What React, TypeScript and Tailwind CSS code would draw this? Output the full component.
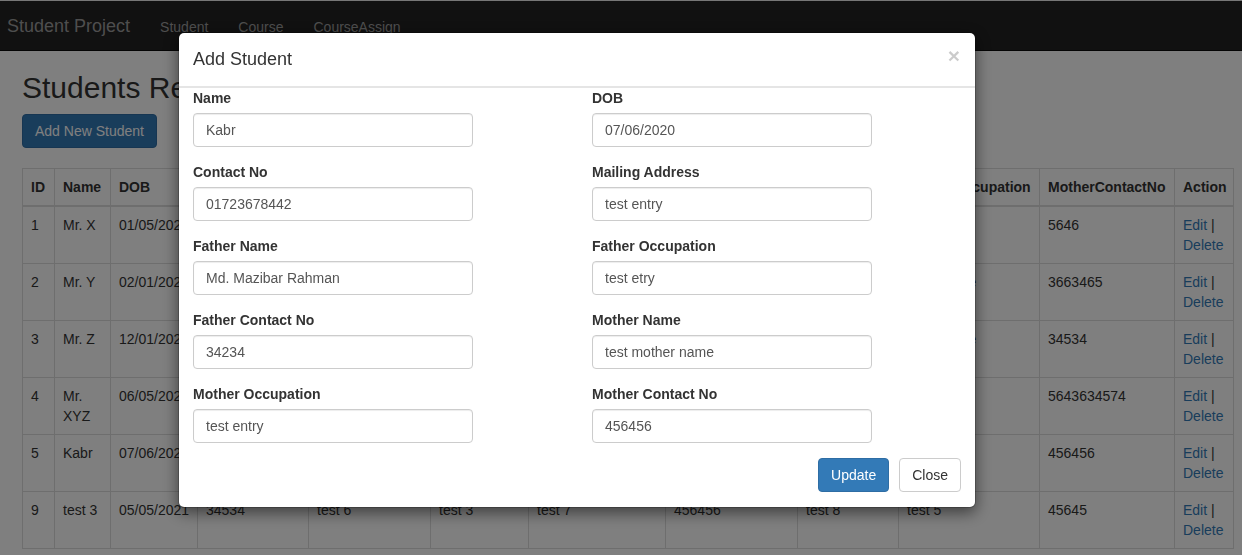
import React from 'react'

type Student = {
  id: number
  name: string
  dob: string
  contact: string
  mailing: string
  fatherName: string
  fatherOcc: string
  fatherContact: string
  motherName: string
  motherOcc: string
  motherContact: string
}

const students: Student[] = [
  { id: 1, name: 'Mr. X', dob: '01/05/2021', contact: '0171234567', mailing: 'Dhaka', fatherName: 'Mr. A', fatherOcc: 'Business', fatherContact: '018123456', motherName: 'Mrs. A', motherOcc: 'Teacher', motherContact: '5646' },
  { id: 2, name: 'Mr. Y', dob: '02/01/2021', contact: '0181234567', mailing: 'Khulna', fatherName: 'Mr. B', fatherOcc: 'Service', fatherContact: '3453453', motherName: 'Mrs. B', motherOcc: 'House wife', motherContact: '3663465' },
  { id: 3, name: 'Mr. Z', dob: '12/01/2020', contact: '0191234567', mailing: 'Rajshahi', fatherName: 'Mr. C', fatherOcc: 'Farmer', fatherContact: '34534', motherName: 'Mrs. C', motherOcc: 'House wife', motherContact: '34534' },
  { id: 4, name: 'Mr. XYZ', dob: '06/05/2021', contact: '0161234567', mailing: 'Sylhet', fatherName: 'Mr. D', fatherOcc: 'Doctor', fatherContact: '564363', motherName: 'Mrs. D', motherOcc: 'Doctor', motherContact: '5643634574' },
  { id: 5, name: 'Kabr', dob: '07/06/2020', contact: '01723678442', mailing: 'test entry', fatherName: 'Md. Mazibar Rahman', fatherOcc: 'test etry', fatherContact: '34234', motherName: 'test mother name', motherOcc: 'test entry', motherContact: '456456' },
  { id: 9, name: 'test 3', dob: '05/05/2021', contact: '34534', mailing: 'test 6', fatherName: 'test 3', fatherOcc: 'test 7', fatherContact: '456456', motherName: 'test 8', motherOcc: 'test 5', motherContact: '45645' },
]

const headers = ['ID', 'Name', 'DOB', 'ContactNo', 'MailingAddress', 'FatherName', 'FatherOccupation', 'FatherContactNo', 'MotherName', 'MotherOccupation', 'MotherContactNo', 'Action']

const fields: [string, string][] = [
  ['Name', 'Kabr'],
  ['DOB', '07/06/2020'],
  ['Contact No', '01723678442'],
  ['Mailing Address', 'test entry'],
  ['Father Name', 'Md. Mazibar Rahman'],
  ['Father Occupation', 'test etry'],
  ['Father Contact No', '34234'],
  ['Mother Name', 'test mother name'],
  ['Mother Occupation', 'test entry'],
  ['Mother Contact No', '456456'],
]

const td = 'border border-[#ddd] p-[8px] align-top leading-[20px]'

function Navbar() {
  return (
    <div className="flex h-[51px] items-center border-t border-b border-t-[#eee] border-b-[#080808] bg-[#222]">
      <span className="pl-[7px] pr-[15px] text-[18px] leading-[20px] text-[#9d9d9d]">Student Project</span>
      {['Student', 'Course', 'CourseAssign'].map((l) => (
        <span key={l} className="px-[15px] pt-[2px] text-[14px] leading-[20px] text-[#9d9d9d]">
          {l}
        </span>
      ))}
    </div>
  )
}

function StudentTable() {
  return (
    <table className="mt-[20px] w-[1211px] table-fixed border-collapse border border-[#ddd] text-[14px] text-[#333]">
      <colgroup>
        <col className="w-[32px]" />
        <col className="w-[56px]" />
        <col className="w-[87px]" />
        <col className="w-[111px]" />
        <col className="w-[122px]" />
        <col className="w-[98px]" />
        <col className="w-[137px]" />
        <col className="w-[132px]" />
        <col className="w-[101px]" />
        <col className="w-[141px]" />
        <col className="w-[135px]" />
        <col className="w-[59px]" />
      </colgroup>
      <thead>
        <tr>
          {headers.map((h) => (
            <th key={h} className="overflow-hidden border border-b-2 border-[#ddd] p-[8px] text-left align-bottom font-bold leading-[20px] whitespace-nowrap">
              {h}
            </th>
          ))}
        </tr>
      </thead>
      <tbody>
        {students.map((s) => (
          <tr key={s.id}>
            <td className={td}>{s.id}</td>
            <td className={td}>{s.name}</td>
            <td className={td}>{s.dob}</td>
            <td className={td}>{s.contact}</td>
            <td className={td}>{s.mailing}</td>
            <td className={td}>{s.fatherName}</td>
            <td className={td}>{s.fatherOcc}</td>
            <td className={td}>{s.fatherContact}</td>
            <td className={td}>{s.motherName}</td>
            <td className={td}>{s.motherOcc}</td>
            <td className={td}>{s.motherContact}</td>
            <td className={td}>
              <span className="text-[#337ab7]">Edit</span> | <span className="text-[#337ab7]">Delete</span>
            </td>
          </tr>
        ))}
      </tbody>
    </table>
  )
}

function StudentModal() {
  return (
    <div className="fixed inset-0 bg-black/50">
      <div className="mt-[32px] ml-[178px] w-[798px] rounded-[6px] border border-black/20 bg-white bg-clip-padding shadow-[0_5px_15px_rgba(0,0,0,0.5)]">
        {/* header */}
        <div className="flex h-[55px] items-center justify-between border-b-2 border-[#e5e5e5] pr-[15px] pl-[14px]">
          <h4 className="text-[18px] leading-[25.7px] text-[#333]">Add Student</h4>
          <span className="-mt-[8px] text-[21px] leading-none font-bold text-black opacity-20">×</span>
        </div>

        {/* body */}
        <div className="grid grid-cols-[399px_1fr] px-[14px]">
          {fields.map(([label, value]) => (
            <div key={label} className="mb-[15px]">
              <label className="mb-[5px] block text-[14px] leading-[20px] font-bold text-[#333]">{label}</label>
              <input
                readOnly
                value={value}
                className="block h-[34px] w-[280px] rounded-[4px] border border-[#ccc] bg-white px-[12px] text-[14px] text-[#555] shadow-[inset_0_1px_1px_rgba(0,0,0,0.075)] outline-none"
              />
            </div>
          ))}
        </div>

        {/* footer */}
        <div className="flex justify-end gap-[10px] px-[14px] pb-[15px]">
          <button className="h-[34px] rounded-[4px] border border-[#2e6da4] bg-[#337ab7] px-[12px] text-[14px] text-white">Update</button>
          <button className="h-[34px] rounded-[4px] border border-[#ccc] bg-white px-[12px] text-[14px] text-[#333]">Close</button>
        </div>
      </div>
    </div>
  )
}

export default function App() {
  return (
    <div className="min-h-[555px] bg-white font-['Liberation_Sans',Arial,sans-serif] text-[14px] text-[#333]">
      <Navbar />
      <div className="px-[22px]">
        <h2 className="mt-[20px] text-[30px] leading-[33px] font-medium">Students Record</h2>
        <button className="mt-[10px] h-[34px] rounded-[4px] border border-[#2e6da4] bg-[#337ab7] px-[12px] text-[14px] text-white">
          Add New Student
        </button>
        <StudentTable />
      </div>
      <StudentModal />
    </div>
  )
}
